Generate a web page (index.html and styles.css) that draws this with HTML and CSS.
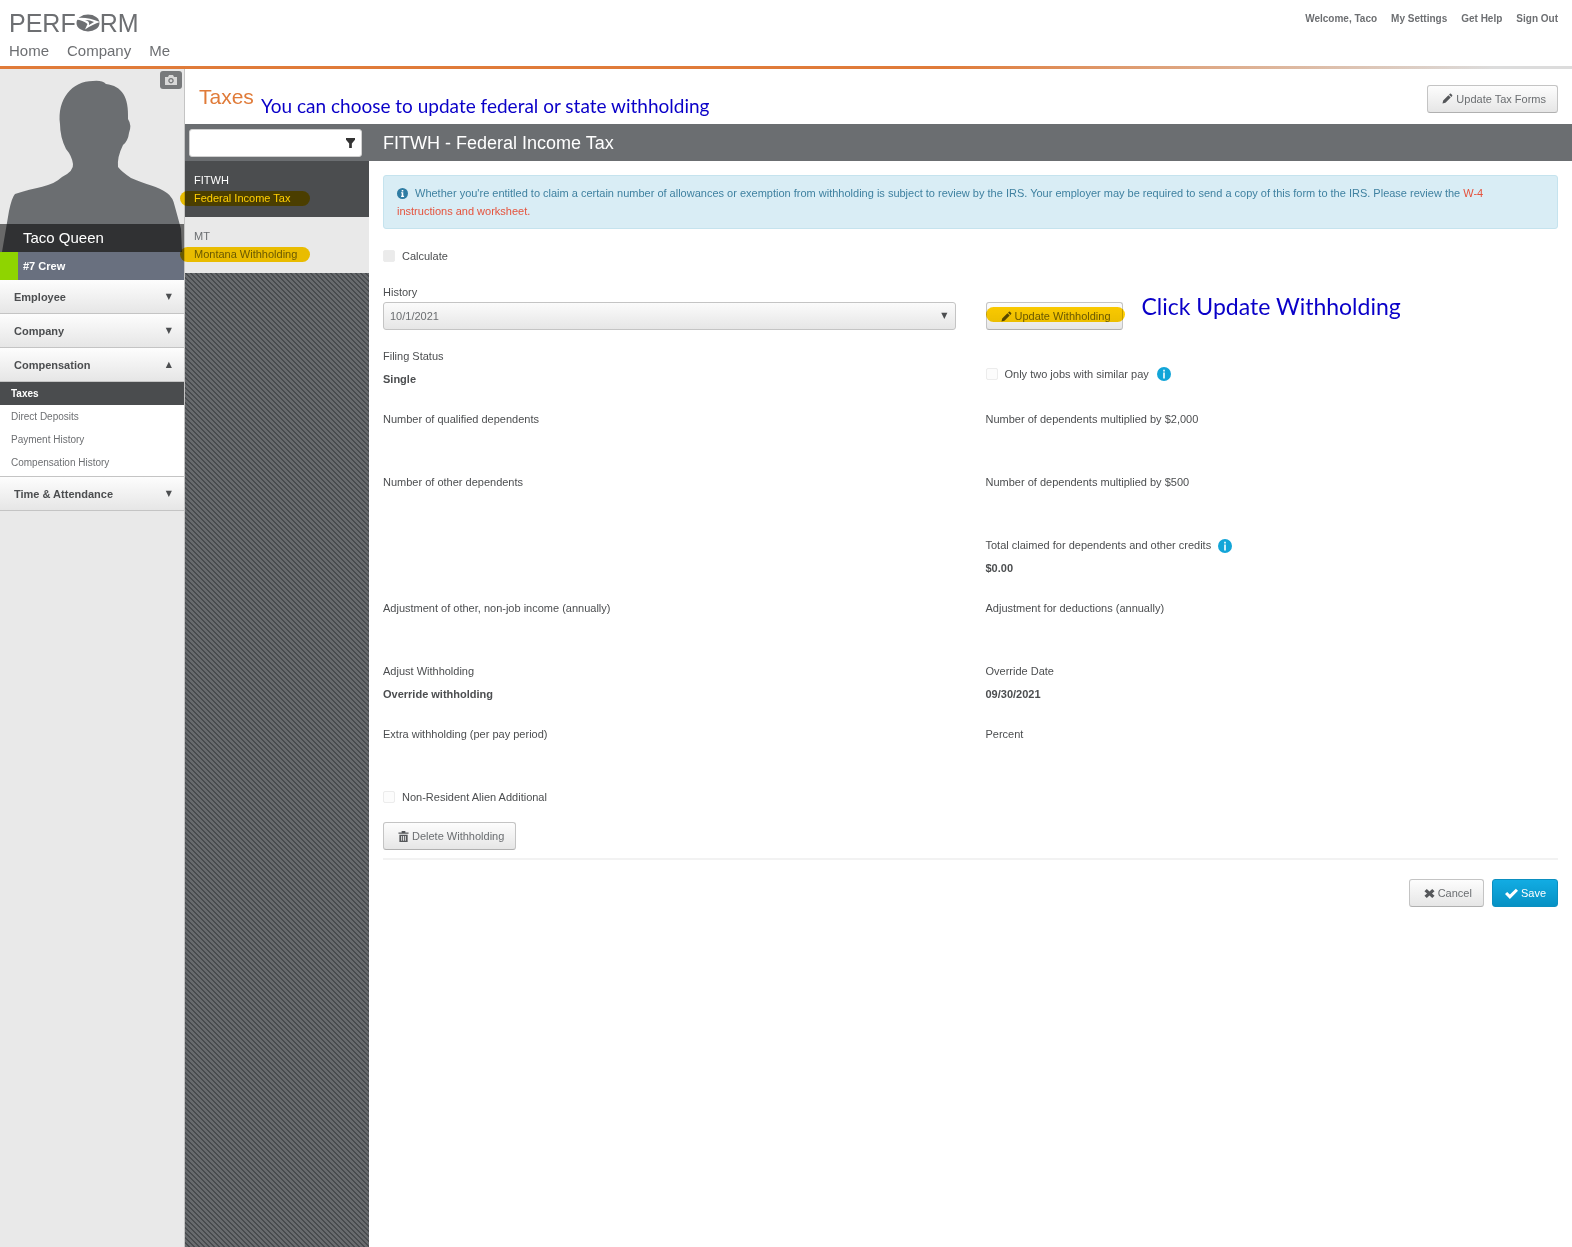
FILE: index.html
```html
<!DOCTYPE html>
<html lang="en">
<head>
  <meta charset="UTF-8" />
  <meta name="viewport" content="width=device-width, initial-scale=1" />
  <title>Perform - Taxes</title>
  <link rel="stylesheet" href="styles.css">
</head>
<body>
  <!-- shared icons -->
  <svg class="sprite" aria-hidden="true">
    <symbol id="pencil" viewBox="0 0 12 12"><path d="M0.5 11.5 L1.3 8.2 L7 2.5 L9.5 5 L3.8 10.7 Z M7.7 1.8 L8.6 0.9 Q9.2 0.4 9.8 0.9 L11.1 2.2 Q11.6 2.8 11.1 3.4 L10.2 4.3 Z"/></symbol>
    <symbol id="trash" viewBox="0 0 12 12"><path d="M4 0h4v1.5h3.5V3H0.5V1.5H4z"/><path fill-rule="evenodd" d="M1.5 4h9v8h-9z M3.5 5.5v5h1v-5z M5.5 5.5v5h1v-5z M7.5 5.5v5h1v-5z"/></symbol>
    <symbol id="cross" viewBox="0 0 12 12"><path d="M0.5 3.5 L3 1 L6 3.8 L9 1 L11.5 3.5 L8.7 6 L11.5 8.5 L9 11 L6 8.2 L3 11 L0.5 8.5 L3.3 6 Z"/></symbol>
    <symbol id="check" viewBox="0 0 12 12"><path d="M0 6.5 L2 4.5 L4.5 7 L10 1.5 L12 3.5 L4.5 11 Z"/></symbol>
    <symbol id="info" viewBox="0 0 14 14"><circle cx="7" cy="7" r="7"/><path fill="#fff" d="M6 2.5h2v2H6z M5.2 5.5H8v4.5h1v1.3H5.2V10H6V6.8h-.8z"/></symbol>
    <symbol id="info-thin" viewBox="0 0 14 14"><circle cx="7" cy="7" r="7"/><path fill="#fff" d="M6.2 2.8h1.6v1.7H6.2z M6.2 5.5h1.6v6H6.2z"/></symbol>
  </svg>

  <header class="top">
    <div class="brand">
      <div class="logo">
        <span>PERF</span>
        <svg viewBox="0 0 24 18" width="24" height="18" aria-hidden="true"><ellipse cx="12" cy="9" rx="11.5" ry="8.5" fill="#6d6f72"/><path fill="#fff" fill-rule="evenodd" d="M0 4 Q11 2.500 24 8 Q17 10 9 15.5 L11.500 10 Q7 6 0 5.5 Z M9 6 Q14 7 13 11 L18 8 Q13 5.500 9 6 Z"/></svg>
        <span>RM</span>
      </div>
      <nav class="main-nav">
        <a href="#">Home</a>
        <a href="#">Company</a>
        <a href="#">Me</a>
      </nav>
    </div>
    <nav class="user-nav">
      <a href="#">Welcome, Taco</a>
      <a href="#">My Settings</a>
      <a href="#">Get Help</a>
      <a href="#">Sign Out</a>
    </nav>
  </header>

  <div class="layout">
    <aside class="sidebar">
      <div class="photo">
        <svg class="person" viewBox="0 0 184 183" aria-hidden="true"><path fill="#6b6e71" d="M2 183 L9 142 Q12 128 15 125 C35 118 52 118 62 108 Q74 102 73 95 Q72 87 66 80 Q60 68 60 55 C57 30 72 12 93 12 Q102 11 106 15 C122 17 129 28 128 50 Q132 56 129 64 Q128 72 123 76 Q117 88 118 98 Q122 103 131 109 C146 116 158 117 167 124 Q173 128 175 138 L181 160 L182 183 Z"/></svg>
        <button class="camera" type="button" aria-label="Change photo">
          <svg viewBox="0 0 12 10" width="12" height="10"><path fill="#d8d8d8" fill-rule="evenodd" d="M0 2h3l1-2h4l1 2h3v8H0z M6 3a2.7 2.7 0 1 0 0.01 0z M6 4.3a1.4 1.4 0 1 1-0.01 0z"/></svg>
        </button>
        <div class="name">Taco Queen</div>
      </div>
      <div class="role">#7 Crew</div>
      <nav class="menu">
        <button type="button">Employee <span>▼</span></button>
        <button type="button">Company <span>▼</span></button>
        <button type="button">Compensation <span>▲</span></button>
        <ul>
          <li><a class="active" href="#">Taxes</a></li>
          <li><a href="#">Direct Deposits</a></li>
          <li><a href="#">Payment History</a></li>
          <li><a href="#">Compensation History</a></li>
        </ul>
        <button type="button">Time &amp; Attendance <span>▼</span></button>
      </nav>
    </aside>

    <div class="page">
      <div class="title-bar">
        <h1>Taxes</h1>
        <p class="note note-title">You can choose to update federal or state withholding</p>
        <button class="btn" type="button"><svg><use href="#pencil"/></svg>Update Tax Forms</button>
      </div>

      <div class="band">
        <div class="filter">
          <input type="text" aria-label="Filter taxes" />
          <svg viewBox="0 0 10 11" width="9" height="10" aria-hidden="true"><path fill="#333" d="M0 0h10v2L6.5 6v5h-3V6L0 2z"/></svg>
        </div>
        <h2>FITWH - Federal Income Tax</h2>
      </div>

      <div class="body">
        <div class="tax-list">
          <a class="tax selected" href="#">
            <span>FITWH</span>
            <span class="marked">Federal Income Tax</span>
          </a>
          <a class="tax" href="#">
            <span>MT</span>
            <span class="marked">Montana Withholding</span>
          </a>
        </div>

        <main class="content">
          <div class="alert">
            <svg width="11" height="11"><use href="#info"/></svg>Whether you're entitled to claim a certain number of allowances or exemption from withholding is subject to review by the IRS. Your employer may be required to send a copy of this form to the IRS. Please review the <a href="#">W-4 instructions and worksheet.</a>
          </div>

          <form>
            <label class="check calc"><input type="checkbox" disabled />Calculate</label>

            <div class="grid history">
              <div>
                <label for="history">History</label>
                <div class="select">
                  <select id="history">
                    <option>10/1/2021</option>
                  </select>
                  <span>▼</span>
                </div>
              </div>
              <div class="update">
                <button class="btn marked-btn" type="button"><svg><use href="#pencil"/></svg>Update Withholding</button>
                <p class="note note-update">Click Update Withholding</p>
              </div>
            </div>

            <div class="grid fields">
              <div class="field"><span>Filing Status</span><b>Single</b></div>
              <div class="field two-jobs">
                <label class="check"><input type="checkbox" disabled />Only two jobs with similar pay</label>
                <svg class="tip"><use href="#info-thin"/></svg>
              </div>
              <div class="field"><span>Number of qualified dependents</span></div>
              <div class="field"><span>Number of dependents multiplied by $2,000</span></div>
              <div class="field"><span>Number of other dependents</span></div>
              <div class="field"><span>Number of dependents multiplied by $500</span></div>
              <div class="field"></div>
              <div class="field"><span>Total claimed for dependents and other credits <svg class="tip"><use href="#info-thin"/></svg></span><b>$0.00</b></div>
              <div class="field"><span>Adjustment of other, non-job income (annually)</span></div>
              <div class="field"><span>Adjustment for deductions (annually)</span></div>
              <div class="field"><span>Adjust Withholding</span><b>Override withholding</b></div>
              <div class="field"><span>Override Date</span><b>09/30/2021</b></div>
              <div class="field"><span>Extra withholding (per pay period)</span></div>
              <div class="field"><span>Percent</span></div>
            </div>

            <label class="check"><input type="checkbox" disabled />Non-Resident Alien Additional</label>
            <button class="btn delete" type="button"><svg><use href="#trash"/></svg>Delete Withholding</button>

            <div class="actions">
              <button class="btn" type="button"><svg><use href="#cross"/></svg>Cancel</button>
              <button class="btn primary" type="submit"><svg><use href="#check"/></svg>Save</button>
            </div>
          </form>
        </main>
      </div>
    </div>
  </div>
</body>
</html>
```

FILE: styles.css
```css
* {
  box-sizing: border-box;
}
body {
  margin: 0;
  min-height: 100vh;
  display: flex;
  flex-direction: column;
  background: #fff;
  color: #4c4e50;
  font-family: "Liberation Sans", Arial, sans-serif;
  font-size: 11px;
  line-height: 18px;
}
a {
  color: inherit;
  text-decoration: none;
}
h1, h2, p, ul {
  margin: 0;
  padding: 0;
  font-weight: normal;
}
button, input, select {
  font: inherit;
  color: inherit;
}
.sprite {
  position: absolute;
  width: 0;
  height: 0;
}

/* header */
.top {
  display: flex;
  justify-content: space-between;
  height: 69px;
  padding: 10px 14px 0 9px;
  border-bottom: 3px solid;
  border-image: linear-gradient(to right, #e07b39 60%, #dcdcdc 95%) 1;
  color: #6d6f72;
}
.logo {
  display: flex;
  align-items: center;
  height: 26px;
  font-size: 25px;
}
.main-nav {
  display: flex;
  gap: 18px;
  padding-top: 6px;
  font-size: 15px;
}
.user-nav {
  display: flex;
  gap: 14px;
  font-size: 10px;
  font-weight: bold;
}

.layout {
  flex: 1;
  display: flex;
}

/* sidebar */
.sidebar {
  width: 185px;
  flex: none;
  background: #e9e9e9;
  border-right: 1px solid #c4c4c4;
}
.photo {
  position: relative;
  height: 183px;
}
.person {
  display: block;
  width: 100%;
  height: 100%;
}
.camera {
  position: absolute;
  top: 2px;
  right: 2px;
  display: flex;
  align-items: center;
  justify-content: center;
  width: 22px;
  height: 18px;
  padding: 0;
  border: 0;
  border-radius: 3px;
  background: #77797b;
}
.name {
  position: absolute;
  left: 0;
  right: 0;
  bottom: 0;
  padding: 5px 23px;
  background: rgba(0, 0, 0, 0.55);
  color: #fff;
  font-size: 15px;
}
.role {
  padding: 5px 0 5px 5px;
  border-left: 18px solid #8fd400;
  background: #69707f;
  color: #fff;
  font-weight: bold;
}
.menu button {
  display: flex;
  justify-content: space-between;
  align-items: center;
  width: 100%;
  height: 34px;
  padding: 0 12px 0 14px;
  border: 0;
  border-bottom: 1px solid #c4c4c4;
  background: linear-gradient(#fdfdfd, #e6e6e6);
  font-weight: bold;
}
.menu button span, .select span {
  font-family: "DejaVu Sans", sans-serif;
  font-size: 8px;
}
.menu ul {
  padding-bottom: 2px;
  list-style: none;
  background: #fff;
  border-bottom: 1px solid #c4c4c4;
}
.menu a {
  display: block;
  padding: 3px 11px 2px;
  color: #6d6f72;
  font-size: 10px;
}
.menu a.active {
  background: #4a4c4e;
  color: #fff;
  font-weight: bold;
}

/* page */
.page {
  flex: 1;
  display: flex;
  flex-direction: column;
}
.title-bar {
  position: relative;
  display: flex;
  justify-content: space-between;
  align-items: center;
  height: 55px;
  padding: 4px 14px 0;
}
h1 {
  padding-bottom: 4px;
  color: #e07b39;
  font-size: 21px;
}
.note {
  position: absolute;
  color: #0a00c8;
  font-family: Lato, sans-serif;
  white-space: nowrap;
}
.note-title {
  left: 76px;
  top: 25px;
  font-size: 19px;
  line-height: 24px;
}
.note-update {
  left: 156px;
  top: -10px;
  font-size: 23px;
  line-height: 28px;
}
.band {
  display: flex;
  align-items: center;
  height: 37px;
  background: #6b6e71;
  color: #fff;
}
.filter {
  position: relative;
  width: 184px;
  padding: 0 7px 0 4px;
}
.filter input {
  display: block;
  width: 100%;
  height: 28px;
  padding: 0 28px 0 8px;
  border: 1px solid #d0d0d0;
  border-radius: 3px;
  background: #fff;
  color: #333;
}
.filter svg {
  position: absolute;
  right: 14px;
  top: 9px;
}
h2 {
  padding-left: 14px;
  font-size: 18px;
}
.body {
  flex: 1;
  display: flex;
}
.tax-list {
  width: 184px;
  flex: none;
  background-color: #484b4e;
  background-image: linear-gradient(45deg, #686b6e 25%, transparent 25%, transparent 50%, #686b6e 50%, #686b6e 75%, transparent 75%);
  background-size: 5px 5px;
}
.tax {
  display: flex;
  flex-direction: column;
  height: 56px;
  padding: 10px 9px;
  background: #e9e9e9;
  color: #6b6e71;
}
.tax.selected {
  background: #4b4d4f;
  color: #fff;
}
.marked, .marked-btn {
  position: relative;
}
/* highlighter stroke */
.marked::after, .marked-btn::after {
  content: "";
  position: absolute;
  height: 15px;
  border-radius: 8px;
  background: #ffce00;
  mix-blend-mode: multiply;
}
.marked::after {
  left: -14px;
  right: 50px;
  top: 2px;
}
.marked-btn::after {
  left: -1px;
  right: -3px;
  top: 4px;
}

/* content */
.content {
  flex: 1;
  padding: 14px;
}
.alert {
  padding: 8px 26px 8px 13px;
  border: 1px solid #c5e3ee;
  border-radius: 3px;
  background: #d9edf5;
  color: #3f81a0;
}
.alert svg {
  margin-right: 7px;
  vertical-align: -2px;
  fill: #2f7ca3;
}
.alert a {
  color: #e5533d;
}
.check {
  display: flex;
  align-items: center;
}
.check input {
  appearance: none;
  width: 12px;
  height: 12px;
  margin: 0 7px 0 0;
  border: 1px solid #ececec;
  border-radius: 2px;
  background: #fcfcfc;
}
.calc {
  padding: 18px 0;
}
.calc input {
  background: #ebebeb;
}
.grid {
  display: grid;
  grid-template-columns: 1fr 1fr;
  column-gap: 30px;
}
.history {
  align-items: end;
  margin-bottom: 17px;
}
.update {
  position: relative;
}
.select {
  position: relative;
  margin-top: 1px;
}
.select select {
  display: block;
  appearance: none;
  width: 100%;
  height: 28px;
  padding: 0 6px;
  border: 1px solid #c4c4c4;
  border-radius: 3px;
  background: linear-gradient(#fbfbfb, #e6e6e6);
  color: #6b6e71;
}
.select span {
  position: absolute;
  right: 8px;
  top: 5px;
}
.field {
  display: flex;
  flex-direction: column;
  gap: 5px;
  height: 63px;
}
.two-jobs {
  flex-direction: row;
  align-items: flex-start;
  gap: 8px;
  padding-top: 18px;
}
.tip {
  width: 14px;
  height: 14px;
  fill: #12a5d8;
}
.two-jobs .tip {
  margin-top: 2px;
}
.field span .tip {
  margin: -2px 0 -2px 4px;
  vertical-align: middle;
}
.btn {
  display: inline-flex;
  align-items: center;
  gap: 3px;
  height: 28px;
  padding: 0 11px 0 14px;
  border: 1px solid #c4c4c4;
  border-bottom-color: #b0b0b0;
  border-radius: 3px;
  background: linear-gradient(#fdfdfd, #e6e6e6);
  color: #6b6e71;
}
.btn svg {
  width: 11px;
  height: 11px;
  fill: #55575a;
}
.update .btn {
  display: flex;
}
.delete {
  margin-top: 16px;
}
.actions {
  display: flex;
  justify-content: flex-end;
  gap: 8px;
  margin-top: 8px;
  padding-top: 19px;
  border-top: 2px solid #f2f2f2;
}
.btn.primary {
  padding-left: 12px;
  border-color: #0b8fc0;
  background: linear-gradient(#12ace3, #0691c4);
  color: #fff;
}
.btn.primary svg {
  width: 13px;
  height: 13px;
  fill: #fff;
}
```
